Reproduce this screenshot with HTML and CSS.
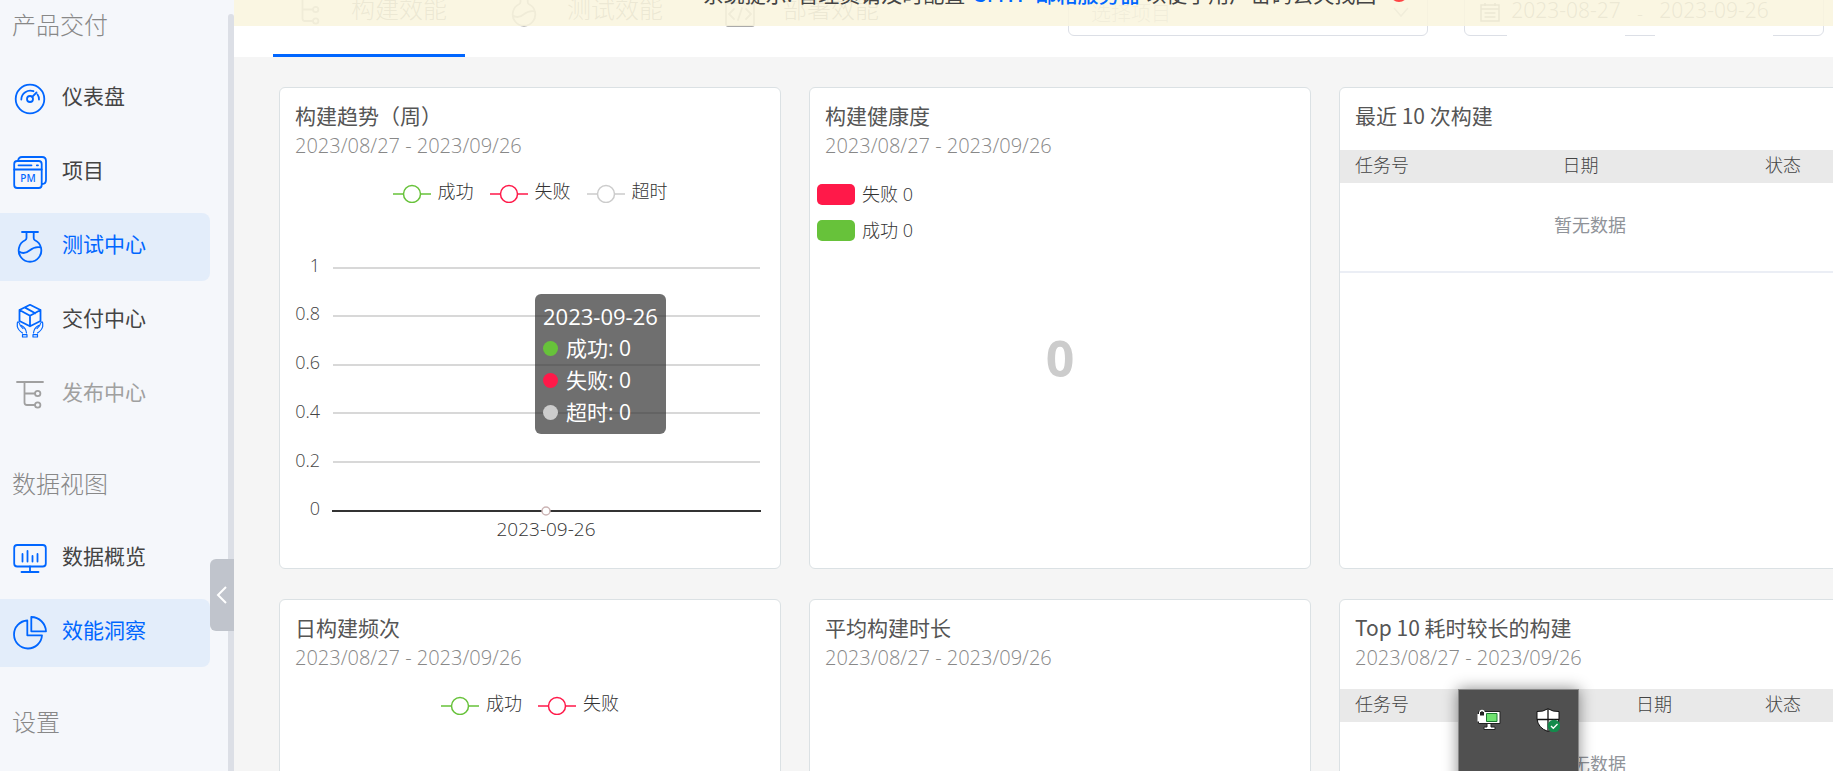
FILE: index.html
```html
<!DOCTYPE html>
<html lang="zh-CN">
<head>
<meta charset="utf-8">
<title>效能洞察</title>
<link rel="stylesheet" href="styles.css">
</head>
<body>
<svg class="defs" aria-hidden="true">
  <symbol id="i-tree" viewBox="0 0 34 34"><path d="M4 4H30M11.500 4V24.500Q11.500 27 14 27H22M11.500 15.500H22"/><circle cx="24.700" cy="15.500" r="2.700"/><circle cx="24.700" cy="27" r="2.700"/></symbol>
  <symbol id="i-flask" viewBox="0 0 34 34"><path d="M9 2H25M13.500 2V8Q13.500 9.500 12 10.300A11.300 11.300 0 1 0 22 10.300Q20.700 9.500 20.700 8V2M6 21.500Q11 25 16.500 20.500T28 17.500"/></symbol>
  <symbol id="i-code" viewBox="0 0 34 34"><rect x="3" y="3" width="28" height="29" rx="2"/><path d="M3 9H31M11 15l-5 5 5 5M23 15l5 5-5 5M19 14l-4 12"/></symbol>
</svg>
<div class="app">
  <aside class="sidebar">
    <nav class="menu">
      <h2 class="group">产品交付</h2>
      <a class="item" href="#"><svg class="icon" viewBox="0 0 34 34"><circle cx="17" cy="17" r="14.300"/><circle cx="17" cy="17" r="3"/><path d="M8.300 17.500A9 9 0 0 1 20.500 9.200M19.200 14.800L23.500 10.500M24.500 12.500Q26 14.500 26 17.500"/></svg><span>仪表盘</span></a>
      <a class="item" href="#"><svg class="icon" viewBox="0 0 34 34"><rect x="1.200" y="5" width="27.500" height="27" rx="3"/><path d="M5 5Q5.500 1 9 1H29Q33 1 33 5V24Q33 28 29 28M1.200 13.500H28.700M5.500 9.300H18.500M23.800 9.300H25"/><text class="pm" x="15" y="26" text-anchor="middle">PM</text></svg><span>项目</span></a>
      <a class="item active" href="#"><svg class="icon"><use href="#i-flask"/></svg><span>测试中心</span></a>
      <a class="item" href="#"><svg class="icon" viewBox="0 0 34 34"><path d="M17 .8L27.500 6V17L17 22.300L6.500 17V6ZM6.500 6L17 11.800L27.500 6M17 11.800V22.300M11.700 3.400L22.200 9.200"/><path class="thin" d="M6 18.500Q4.300 17 4.300 19.500V22.500Q5 26 9.500 29M6.500 19.500Q7 22.500 10 24.500M8.500 21.500Q13 24 13.500 29M9.500 30.700H14V33H9.500ZM28 18.500Q29.700 17 29.700 19.500V22.500Q29 26 24.500 29M27.500 19.500Q27 22.500 24 24.500M25.500 21.500Q21 24 20.500 29M20 30.700H24.500V33H20Z"/></svg><span>交付中心</span></a>
      <a class="item muted" href="#"><svg class="icon"><use href="#i-tree"/></svg><span>发布中心</span></a>
      <h2 class="group">数据视图</h2>
      <a class="item" href="#"><svg class="icon" viewBox="0 0 34 34"><rect x="1.200" y="3" width="31.600" height="21.500" rx="3"/><path d="M17 24.500V30M8.500 30H25.500M9.500 12V19.500M14.500 9V19.500M19.500 14V19.500M24.500 12V19.500"/></svg><span>数据概览</span></a>
      <a class="item active" href="#"><svg class="icon" viewBox="0 0 34 34"><path d="M14.300 4.500A14 14 0 1 0 29 19.300H14.300ZM18.300 1A15 15 0 0 1 33 15.300H18.300Z"/></svg><span>效能洞察</span></a>
      <h2 class="group">设置</h2>
    </nav>
    <button class="collapse" aria-label="收起菜单"><svg viewBox="0 0 12 20"><path d="M10 2L2 10L10 18"/></svg></button>
  </aside>

  <main class="main">
    <header class="topbar">
      <nav class="tabs">
        <a class="tab selected" href="#"><svg class="icon"><use href="#i-tree"/></svg><span>构建效能</span></a>
        <a class="tab" href="#"><svg class="icon"><use href="#i-flask"/></svg><span>测试效能</span></a>
        <a class="tab" href="#"><svg class="icon"><use href="#i-code"/></svg><span>部署效能</span></a>
      </nav>
      <div class="filters">
        <button class="select"><span>选择项目</span><svg viewBox="0 0 16 12"><path d="M1 2L8 10L15 2"/></svg></button>
        <div class="range">
          <svg viewBox="0 0 20 20"><path d="M1 3H19V19H1ZM1 7H19M5 1V4M15 1V4M4.500 11H15.500M4.500 15H15.500"/></svg>
          <input class="day" aria-label="开始日期" value="2023-08-27"><span>-</span><input class="day" aria-label="结束日期" value="2023-09-26">
        </div>
      </div>
    </header>
    <div class="notice" role="alert">
      <span>系统提示: 管理员请及时配置 <a href="#">SMTP 邮箱服务器</a> 以便于用户密码丢失找回</span>
      <button class="close" aria-label="关闭"></button>
    </div>

    <div class="cards">
      <section class="card">
        <h3 class="title">构建趋势（周）</h3>
        <p class="period">2023/08/27 - 2023/09/26</p>
        <ul class="legend">
          <li class="ok"><svg class="mark" viewBox="0 0 38 20"><path d="M0 11H10M28 11H38"/><circle cx="19" cy="11" r="8.500"/></svg>成功</li>
          <li class="fail"><svg class="mark" viewBox="0 0 38 20"><path d="M0 11H10M28 11H38"/><circle cx="19" cy="11" r="8.500"/></svg>失败</li>
          <li class="late"><svg class="mark" viewBox="0 0 38 20"><path d="M0 11H10M28 11H38"/><circle cx="19" cy="11" r="8.500"/></svg>超时</li>
        </ul>
        <svg class="plot" viewBox="0 0 500 310">
          <path class="grid" d="M53 28H480M53 76H480M53 125H480M53 173H480M53 222H480"/>
          <path class="axis" d="M52 271H481"/>
          <g class="ylabels"><text x="40" y="32">1</text><text x="40" y="80">0.8</text><text x="40" y="129">0.6</text><text x="40" y="178">0.4</text><text x="40" y="227">0.2</text><text x="40" y="275">0</text></g>
          <circle class="point" cx="266" cy="271" r="4"/>
          <text class="xlabel" x="266" y="296">2023-09-26</text>
        </svg>
        <div class="tip">
          <strong>2023-09-26</strong>
          <span class="ok"><i></i>成功: 0</span>
          <span class="fail"><i></i>失败: 0</span>
          <span class="late"><i></i>超时: 0</span>
        </div>
      </section>

      <section class="card">
        <h3 class="title">构建健康度</h3>
        <p class="period">2023/08/27 - 2023/09/26</p>
        <div class="health">
          <ul class="swatches">
            <li class="fail"><i></i>失败 0</li>
            <li class="ok"><i></i>成功 0</li>
          </ul>
          <b class="total">0</b>
        </div>
      </section>

      <section class="card">
        <h3 class="title solo">最近 10 次构建</h3>
        <table class="builds recent">
          <thead><tr><th class="c1">任务号</th><th class="c2">日期</th><th class="c3">状态</th></tr></thead>
          <tbody><tr><td colspan="3">暂无数据</td></tr></tbody>
        </table>
      </section>

      <section class="card">
        <h3 class="title">日构建频次</h3>
        <p class="period">2023/08/27 - 2023/09/26</p>
        <ul class="legend">
          <li class="ok"><svg class="mark" viewBox="0 0 38 20"><path d="M0 11H10M28 11H38"/><circle cx="19" cy="11" r="8.500"/></svg>成功</li>
          <li class="fail"><svg class="mark" viewBox="0 0 38 20"><path d="M0 11H10M28 11H38"/><circle cx="19" cy="11" r="8.500"/></svg>失败</li>
        </ul>
      </section>

      <section class="card">
        <h3 class="title">平均构建时长</h3>
        <p class="period">2023/08/27 - 2023/09/26</p>
      </section>

      <section class="card">
        <h3 class="title">Top 10 耗时较长的构建</h3>
        <p class="period">2023/08/27 - 2023/09/26</p>
        <table class="builds slowest">
          <thead><tr><th class="c1">任务号</th><th class="c2">日期</th><th class="c3">状态</th></tr></thead>
          <tbody><tr><td colspan="3">暂无数据</td></tr></tbody>
        </table>
      </section>
    </div>
  </main>

  <div class="tray">
    <svg viewBox="0 0 24 24"><path d="M1.500 3.500H23V15.500H1.500Z" fill="#fff" stroke="#222"/><path d="M9.500 5.500H20V13.500H9.500Z" fill="#6fe26f" stroke="#1d7a32"/><path d="M10 15.500H14V19H18V21.500H7V19H10Z" fill="#fff" stroke="#222"/><path d="M.5 6H9V13.500H.5Z" fill="#fff"/><path d="M3 6V4.500Q3 2.500 5 2.500T7 4.500V6" fill="none" stroke="#fff" stroke-width="1.500"/><path d="M3 4H7V7.500H3Z" fill="#222"/></svg>
    <svg viewBox="0 0 24 24"><path d="M12 .7Q17 4 23 3.500V11Q22 20 12 23.500Q2 20 1 11V3.500Q7 4 12 .7Z" fill="#fff" stroke="#111"/><path d="M12 1V23M1 11.500H23" stroke="#111" stroke-width="1.300"/><circle cx="18" cy="18" r="6.300" fill="#138a4b"/><path d="M15 18L17.300 20.300L21.500 16" fill="none" stroke="#fff" stroke-width="1.300"/></svg>
  </div>
</div>
</body>
</html>
```
FILE: styles.css
```css
* { box-sizing: border-box; }
body {
  margin: 0;
  font-family: "Noto Sans CJK SC", "Noto Sans", sans-serif;
  font-size: 18px;
  font-weight: 300;
  color: #444;
  overflow: hidden;
}
h2, h3, p, ul { margin: 0; padding: 0; font-weight: inherit; list-style: none; }
a { text-decoration: none; color: inherit; }
button, input { font: inherit; color: inherit; padding: 0; border: 0; background: none; }
.defs { position: absolute; width: 0; height: 0; }
.app { display: flex; height: 100vh; position: relative; overflow: hidden; }

.icon { width: 34px; height: 34px; flex: none; fill: none; stroke: currentColor; stroke-width: 1.8px; stroke-linejoin: round; stroke-linecap: round; }
.icon .thin { stroke-width: 1.2px; }
.icon .pm { font: 500 10px "Noto Sans", sans-serif; fill: currentColor; stroke: none; }

/* Sidebar */
.sidebar { width: 234px; flex: none; position: relative; background: #f5f7fb; overflow: hidden; }
.sidebar::after { content: ""; position: absolute; top: 14px; right: 0; bottom: 0; width: 6px; border-radius: 3px 3px 0 0; background: #dcdfe6; }
.menu { display: flex; flex-direction: column; gap: 6px; }
.group { height: 84px; padding: 30px 12px 0; font-size: 24px; line-height: 36px; color: #888; }
.group:first-child { height: 59px; padding-top: 6px; }
.item { display: flex; align-items: center; gap: 15px; width: 210px; height: 68px; padding-left: 13px; border-radius: 0 8px 8px 0; font-size: 21px; font-weight: 400; }
.item span { padding-bottom: 8px; }
.item .icon { color: #06f; }
.item.active { background: #e3edfa; color: #06f; }
.item.muted, .item.muted .icon { color: #a0a0a0; }
.collapse { position: absolute; z-index: 1; right: 0; top: 559px; width: 24px; height: 72px; display: grid; place-items: center; border-radius: 6px 0 0 6px; background: #c0c4cc; }
.collapse svg { width: 12px; height: 20px; fill: none; stroke: #fff; stroke-width: 2px; }

/* Header */
.main { flex: 1; min-width: 0; position: relative; background: #f5f5f5; }
.topbar { display: flex; justify-content: space-between; align-items: center; height: 90px; margin-top: -33px; padding: 0 9px 0 39px; background: #fff; color: #888; }
.tabs { display: flex; align-self: stretch; gap: 24px; font-size: 24px; }
.tab { display: flex; align-items: center; gap: 26px; width: 192px; padding-left: 18px; border-bottom: 3px solid transparent; }
.tab span { padding-bottom: 6px; }
.tab .icon { color: #aaa; }
.tab.selected { border-color: #06f; }
.filters { display: flex; gap: 36px; }
.select, .range { display: flex; align-items: center; width: 360px; height: 48px; border: 1px solid #dcdfe6; border-radius: 6px; }
.select { justify-content: space-between; padding: 0 18px 0 22px; font-size: 20px; color: #b0b4bc; }
.select svg { width: 16px; height: 12px; }
.select svg, .range svg { fill: none; stroke: currentColor; stroke-width: 1.5px; }
.range { padding-left: 15px; }
.range svg { width: 20px; height: 20px; margin-right: 7px; }
.range span { width: 30px; text-align: center; }
.day { width: 118px; height: 50px; padding-bottom: 4px; text-align: center; background: #fff; font-family: "Noto Sans", sans-serif; font-size: 21px; }
.notice { position: absolute; z-index: 2; top: -40px; left: 0; right: 0; height: 66px; display: flex; align-items: center; justify-content: center; gap: 14px; padding-left: 44px; background: rgba(249, 245, 222, .88); font-size: 21px; font-weight: 400; }
.notice a { margin-left: 4px; color: #06f; font-weight: 500; }
.close { width: 18px; height: 18px; border: 2px solid #f44; border-radius: 50%; }

/* Cards */
.cards { display: grid; grid-template-columns: repeat(3, 1fr); grid-auto-rows: 482px; gap: 30px 28px; margin: 30px -8px 0 45px; }
.card { position: relative; display: flex; flex-direction: column; min-width: 0; padding-top: 12px; border: 1px solid #dbe1e4; border-radius: 6px; background: #fff; }
.title { padding: 0 15px; font-size: 21px; font-weight: 400; line-height: 30px; color: #555; }
.title.solo { padding-bottom: 5px; }
.period { padding: 0 15px; font-family: "Open Sans", "Noto Sans", sans-serif; font-size: 20px; line-height: 32px; color: #888; }
.ok { --tone: #67c23a; }
.fail { --tone: #ff1949; }
.late { --tone: #ccc; }
.legend { display: flex; justify-content: center; gap: 16px; margin-top: 16px; line-height: 24px; color: #333; }
.legend li { display: flex; gap: 7px; }
.mark { width: 38px; height: 20px; margin-top: 5px; fill: #fff; stroke: var(--tone); stroke-width: 1.5px; }
.plot { display: block; width: 100%; margin-top: 37px; font-family: "Open Sans", sans-serif; font-size: 18px; fill: #444; }
.grid { stroke: #ccc; stroke-width: 1.5px; }
.axis { stroke: #333; stroke-width: 2px; }
.ylabels { text-anchor: end; }
.point { fill: #fff; stroke: #ccb5b5; stroke-width: 1.5px; }
.xlabel { text-anchor: middle; font-size: 19px; fill: #333; }
.tip { position: absolute; left: 255px; top: 206px; display: flex; flex-direction: column; padding: 6px 8px; border-radius: 6px; background: rgba(50, 50, 50, .7); color: #fff; font-family: "Open Sans", "Noto Sans CJK SC", sans-serif; font-size: 21px; font-weight: 400; line-height: 32px; }
.tip strong { font-size: 22px; font-weight: 400; }
.tip span { display: flex; align-items: center; gap: 8px; }
.tip i { width: 15px; height: 15px; border-radius: 50%; background: var(--tone); }

.health { flex: 1; display: grid; margin-bottom: 14px; }
.swatches, .total { grid-area: 1 / 1; }
.swatches { display: flex; flex-direction: column; gap: 15px; padding: 22px 7px 0; font-family: "Open Sans", "Noto Sans CJK SC", sans-serif; line-height: 20px; color: #333; }
.swatches li { display: flex; gap: 7px; height: 21px; }
.swatches i { width: 38px; height: 21px; border-radius: 5px; background: var(--tone); }
.total { place-self: center; font: 700 50px/60px "Open Sans", sans-serif; color: #ccc; }

.builds { width: 100%; margin-top: 15px; border-collapse: collapse; table-layout: fixed; }
.builds th { height: 33px; padding: 0 15px 6px; text-align: left; font-weight: 300; line-height: 26px; background: #e9e9e9; color: #444; }
.builds td { height: 89px; padding: 0 0 6px; text-align: center; border-bottom: 2px solid #ebeef5; color: #909399; font-weight: 400; }
.recent .c1 { width: 41.5%; }
.slowest .c1 { width: 56.2%; }
.builds .c3 { width: 18%; }

/* System tray flyout */
.tray { position: absolute; z-index: 3; left: 1458px; top: 689px; width: 121px; height: 100px; display: flex; justify-content: space-between; padding: 18px; border: 1px solid #888; background: #505050; box-shadow: 0 0 14px rgba(0, 0, 0, .45); }
.tray svg { width: 24px; height: 24px; }
```
